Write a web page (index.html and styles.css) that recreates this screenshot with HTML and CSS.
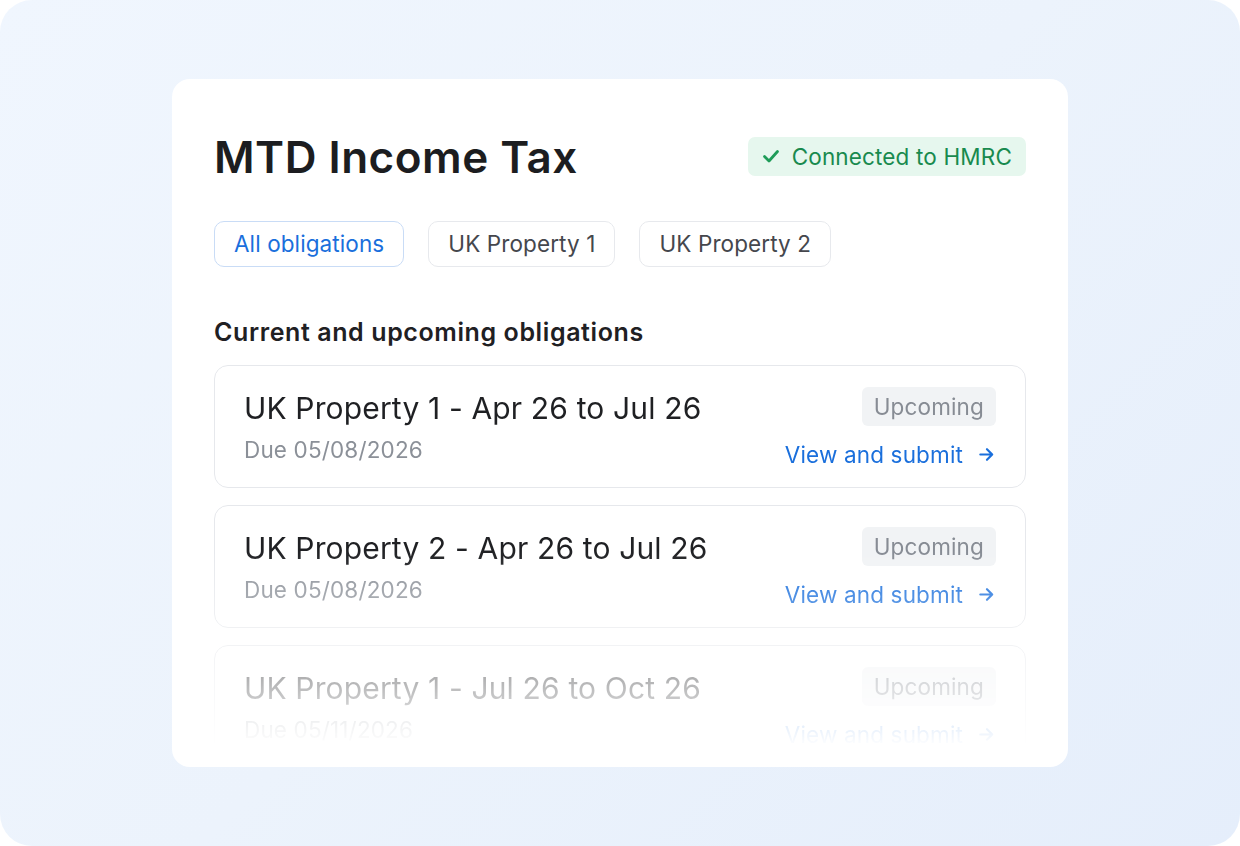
FILE: index.html
```html
<!DOCTYPE html>
<html lang="en">
<head>
    <meta charset="UTF-8">
    <meta name="viewport" content="width=device-width, initial-scale=1.0">
    <title>MTD Income Tax</title>
    <link rel="stylesheet" href="styles.css">
</head>
<body>
    <div class="backdrop">
        <div class="panel">
            <div class="panel-header">
                <h1 class="panel-title">MTD Income Tax</h1>
                <div class="status-badge">
                    <svg class="status-icon" viewBox="0 0 20 20" width="20" height="20">
                        <polyline points="3.5,10.5 8,15 16.5,5.5" fill="none" stroke="currentColor" stroke-width="2.8" stroke-linecap="round" stroke-linejoin="round"/>
                    </svg>
                    <span>Connected to HMRC</span>
                </div>
            </div>

            <div class="tabs">
                <button class="tab active">All obligations</button>
                <button class="tab">UK Property 1</button>
                <button class="tab">UK Property 2</button>
            </div>

            <h2 class="section-title">Current and upcoming obligations</h2>

            <div class="obligations">
                <div class="obligation">
                    <div class="obligation-info">
                        <div class="obligation-name">UK Property 1 - Apr 26 to Jul 26</div>
                        <div class="obligation-due">Due 05/08/2026</div>
                    </div>
                    <div class="obligation-actions">
                        <span class="tag">Upcoming</span>
                        <a class="submit-link" href="#">View and submit
                            <svg viewBox="0 0 20 20" width="19" height="19">
                                <path d="M3.5 10h12M10.5 4.5l5.5 5.5-5.5 5.5" fill="none" stroke="currentColor" stroke-width="2.3" stroke-linecap="round" stroke-linejoin="round"/>
                            </svg>
                        </a>
                    </div>
                </div>

                <div class="obligation">
                    <div class="obligation-info">
                        <div class="obligation-name">UK Property 2 - Apr 26 to Jul 26</div>
                        <div class="obligation-due">Due 05/08/2026</div>
                    </div>
                    <div class="obligation-actions">
                        <span class="tag">Upcoming</span>
                        <a class="submit-link" href="#">View and submit
                            <svg viewBox="0 0 20 20" width="19" height="19">
                                <path d="M3.5 10h12M10.5 4.5l5.5 5.5-5.5 5.5" fill="none" stroke="currentColor" stroke-width="2.3" stroke-linecap="round" stroke-linejoin="round"/>
                            </svg>
                        </a>
                    </div>
                </div>

                <div class="obligation">
                    <div class="obligation-info">
                        <div class="obligation-name">UK Property 1 - Jul 26 to Oct 26</div>
                        <div class="obligation-due">Due 05/11/2026</div>
                    </div>
                    <div class="obligation-actions">
                        <span class="tag">Upcoming</span>
                        <a class="submit-link" href="#">View and submit
                            <svg viewBox="0 0 20 20" width="19" height="19">
                                <path d="M3.5 10h12M10.5 4.5l5.5 5.5-5.5 5.5" fill="none" stroke="currentColor" stroke-width="2.3" stroke-linecap="round" stroke-linejoin="round"/>
                            </svg>
                        </a>
                    </div>
                </div>
            </div>
        </div>
    </div>
</body>
</html>
```

FILE: styles.css
```css
* {
    margin: 0;
    padding: 0;
    box-sizing: border-box;
}

body {
    font-family: 'Inter', 'Noto Sans', sans-serif;
    background: #ffffff;
    color: #1f2023;
}

.backdrop {
    width: 1240px;
    height: 846px;
    border-radius: 32px;
    background: linear-gradient(135deg, #f0f6fe 0%, #ecf3fc 50%, #e5eefb 100%);
    display: flex;
    justify-content: center;
    align-items: center;
    overflow: hidden;
}

.panel {
    width: 896px;
    height: 688px;
    margin-top: -1px;
    background: #ffffff;
    border-radius: 18px;
    padding: 52px 42px 0;
    overflow: hidden;
}

.panel-header {
    display: flex;
    justify-content: space-between;
    align-items: center;
}

.panel-title {
    font-size: 44px;
    font-weight: 600;
    line-height: 53px;
    letter-spacing: 0.5px;
    color: #1c1d20;
}

.status-badge {
    display: flex;
    align-items: center;
    gap: 11px;
    height: 39px;
    padding: 0 14px 0 13px;
    margin-top: -2px;
    background: #e6f7ee;
    border-radius: 7px;
    color: #188a4e;
    font-size: 22.5px;
    letter-spacing: 0.15px;
}

.status-icon {
    color: #1e9c58;
}

.tabs {
    display: flex;
    gap: 24px;
    margin-top: 37px;
}

.tab {
    height: 46px;
    padding: 0 19px;
    font-family: inherit;
    font-size: 22.5px;
    letter-spacing: 0.1px;
    color: #45474d;
    background: #ffffff;
    border: 1.5px solid #e7e9ed;
    border-radius: 10px;
}

.tab.active {
    color: #1a6fdc;
    border-color: #c9dcf6;
}

.section-title {
    margin-top: 50px;
    font-size: 25px;
    font-weight: 600;
    line-height: 30px;
    letter-spacing: 0.6px;
    color: #1f2023;
}

.obligations {
    margin-top: 18px;
    display: flex;
    flex-direction: column;
    gap: 17px;
    -webkit-mask-image: linear-gradient(to bottom, #000 185px, transparent 382px);
    mask-image: linear-gradient(to bottom, #000 185px, transparent 382px);
}

.obligation {
    display: flex;
    justify-content: space-between;
    padding: 21px 29px 18px;
    border: 1.5px solid #e6e8ec;
    border-radius: 14px;
}

.obligation-info {
    padding-top: 4px;
}

.obligation-name {
    font-size: 30px;
    line-height: 34px;
    letter-spacing: 0.15px;
    color: #1f2023;
}

.obligation-due {
    margin-top: 11px;
    font-size: 22.5px;
    line-height: 28px;
    letter-spacing: 0.15px;
    color: #8b9098;
}

.obligation-actions {
    display: flex;
    flex-direction: column;
    align-items: flex-end;
}

.tag {
    height: 39px;
    line-height: 39px;
    padding: 0 12px;
    background: #f1f3f5;
    border-radius: 6px;
    font-size: 22.5px;
    letter-spacing: 0.15px;
    color: #878c94;
}

.submit-link {
    display: flex;
    align-items: center;
    gap: 14px;
    margin-top: 15px;
    font-size: 22.5px;
    line-height: 28px;
    letter-spacing: 0.15px;
    color: #1a6fdc;
    text-decoration: none;
}
```
